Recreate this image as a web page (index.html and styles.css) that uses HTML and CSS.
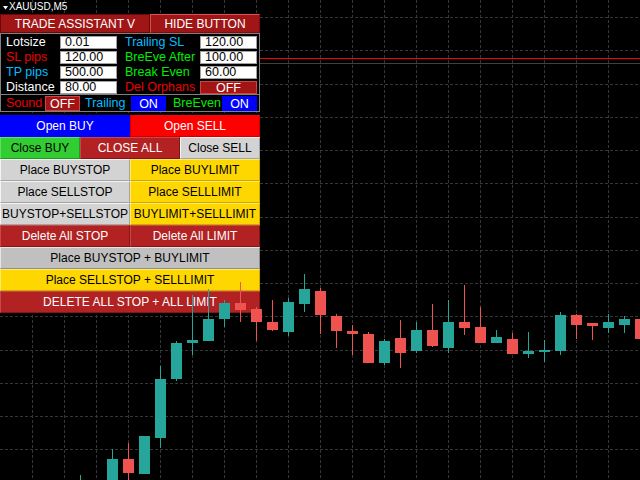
FILE: index.html
```html
<!DOCTYPE html>
<html>
<head>
<meta charset="utf-8">
<link rel="stylesheet" href="styles.css">
</head>
<body>
<div class="chart">
  <svg class="grid" width="640" height="480" viewBox="0 0 640 480">
    <g stroke="#363636" stroke-width="1" stroke-dasharray="3 2" shape-rendering="crispEdges">
      <line x1="32.5" y1="0" x2="32.5" y2="480"/><line x1="64.5" y1="0" x2="64.5" y2="480"/><line x1="96.5" y1="0" x2="96.5" y2="480"/>
      <line x1="128.5" y1="0" x2="128.5" y2="480"/><line x1="160.5" y1="0" x2="160.5" y2="480"/><line x1="192.5" y1="0" x2="192.5" y2="480"/>
      <line x1="224.5" y1="0" x2="224.5" y2="480"/><line x1="256.5" y1="0" x2="256.5" y2="480"/><line x1="288.5" y1="0" x2="288.5" y2="480"/>
      <line x1="320.5" y1="0" x2="320.5" y2="480"/><line x1="352.5" y1="0" x2="352.5" y2="480"/><line x1="384.5" y1="0" x2="384.5" y2="480"/>
      <line x1="416.5" y1="0" x2="416.5" y2="480"/><line x1="448.5" y1="0" x2="448.5" y2="480"/><line x1="480.5" y1="0" x2="480.5" y2="480"/>
      <line x1="512.5" y1="0" x2="512.5" y2="480"/><line x1="544.5" y1="0" x2="544.5" y2="480"/><line x1="576.5" y1="0" x2="576.5" y2="480"/>
      <line x1="608.5" y1="0" x2="608.5" y2="480"/>
      <line x1="0" y1="17.5" x2="640" y2="17.5"/><line x1="0" y1="50.5" x2="640" y2="50.5"/><line x1="0" y1="84.5" x2="640" y2="84.5"/>
      <line x1="0" y1="117.5" x2="640" y2="117.5"/><line x1="0" y1="150.5" x2="640" y2="150.5"/><line x1="0" y1="183.5" x2="640" y2="183.5"/>
      <line x1="0" y1="217.5" x2="640" y2="217.5"/><line x1="0" y1="250.5" x2="640" y2="250.5"/><line x1="0" y1="283.5" x2="640" y2="283.5"/>
      <line x1="0" y1="316.5" x2="640" y2="316.5"/><line x1="0" y1="350.5" x2="640" y2="350.5"/><line x1="0" y1="383.5" x2="640" y2="383.5"/>
      <line x1="0" y1="416.5" x2="640" y2="416.5"/><line x1="0" y1="449.5" x2="640" y2="449.5"/>
    </g>
    <g shape-rendering="crispEdges">
      <rect x="0" y="58" width="640" height="1" fill="#ff0000"/>
      <rect x="0" y="63" width="640" height="1" fill="#404040"/>
    </g>
  </svg>

  <div class="symbol"><svg class="tri" width="5" height="4" viewBox="0 0 5 4"><polygon points="0,0 5,0 2.5,3.5" fill="#ffffff"/></svg><span>XAUUSD,M5</span></div>

  <div class="panel">
    <div class="titlebar">
      <div class="tbtn title">TRADE ASSISTANT V</div>
      <div class="tbtn hide">HIDE BUTTON</div>
    </div>
    <div class="params">
      <span class="lbl c-white">Lotsize</span><span class="inp">0.01</span><span class="lbl lbl2 c-sky">Trailing SL</span><span class="inp">120.00</span>
      <span class="lbl c-red">SL pips</span><span class="inp">120.00</span><span class="lbl lbl2 c-lime">BreEve After</span><span class="inp">100.00</span>
      <span class="lbl c-sky">TP pips</span><span class="inp">500.00</span><span class="lbl lbl2 c-lime">Break Even</span><span class="inp">60.00</span>
      <span class="lbl c-white">Distance</span><span class="inp">80.00</span><span class="lbl lbl2 c-red">Del Orphans</span><span class="tg tg-off">OFF</span>
    </div>
    <div class="toggles">
      <span class="lbl tl1 c-red">Sound</span><span class="tg tg-off">OFF</span>
      <span class="lbl tl2 c-sky">Trailing</span><span class="tg tg-on">ON</span>
      <span class="lbl tl3 c-lime">BreEven</span><span class="tg tg-on">ON</span>
    </div>
    <div class="actions">
      <div class="row"><div class="btn half blue">Open BUY</div><div class="btn half red">Open SELL</div></div>
      <div class="row"><div class="btn w80 green">Close BUY</div><div class="btn w100 fire">CLOSE ALL</div><div class="btn w80 gray">Close SELL</div></div>
      <div class="row"><div class="btn half gray">Place BUYSTOP</div><div class="btn half gold">Place BUYLIMIT</div></div>
      <div class="row"><div class="btn half gray">Place SELLSTOP</div><div class="btn half gold">Place SELLLIMIT</div></div>
      <div class="row"><div class="btn half gray">BUYSTOP+SELLSTOP</div><div class="btn half gold">BUYLIMIT+SELLLIMIT</div></div>
      <div class="row"><div class="btn half fire">Delete All STOP</div><div class="btn half fire">Delete All LIMIT</div></div>
      <div class="row"><div class="btn full silver">Place BUYSTOP + BUYLIMIT</div></div>
      <div class="row"><div class="btn full gold">Place SELLSTOP + SELLLIMIT</div></div>
      <div class="row"><div class="btn full fire">DELETE ALL STOP + ALL LIMIT</div></div>
    </div>
  </div>

  <svg class="candles" width="640" height="480" viewBox="0 0 640 480">
    <g fill="#26a69a" shape-rendering="crispEdges">
      <rect x="80" y="475" width="1" height="5"/>
      <rect x="107" y="459" width="11" height="25"/><rect x="112" y="449" width="1" height="31"/>
      <rect x="139" y="436" width="11" height="38"/>
      <rect x="155" y="379" width="11" height="59"/><rect x="160" y="366" width="1" height="82"/>
      <rect x="171" y="343" width="11" height="36"/><rect x="176" y="341" width="1" height="40"/>
      <rect x="187" y="340" width="11" height="3"/><rect x="192" y="295" width="1" height="60"/>
      <rect x="203" y="319" width="11" height="22"/><rect x="208" y="289" width="1" height="52"/>
      <rect x="219" y="303" width="11" height="16"/><rect x="224" y="300" width="1" height="27"/>
      <rect x="283" y="302" width="11" height="30"/><rect x="288" y="298" width="1" height="38"/>
      <rect x="299" y="289" width="11" height="15"/><rect x="304" y="274" width="1" height="38"/>
      <rect x="379" y="341" width="11" height="22"/><rect x="384" y="339" width="1" height="26"/>
      <rect x="411" y="330" width="11" height="21"/><rect x="416" y="322" width="1" height="31"/>
      <rect x="443" y="322" width="11" height="26"/><rect x="448" y="300" width="1" height="53"/>
      <rect x="491" y="337" width="11" height="6"/><rect x="496" y="330" width="1" height="13"/>
      <rect x="523" y="351" width="11" height="3"/><rect x="528" y="332" width="1" height="26"/>
      <rect x="539" y="350" width="11" height="2"/><rect x="544" y="340" width="1" height="22"/>
      <rect x="555" y="315" width="11" height="36"/><rect x="560" y="312" width="1" height="43"/>
      <rect x="603" y="322" width="11" height="6"/><rect x="608" y="314" width="1" height="19"/>
      <rect x="619" y="319" width="11" height="6"/><rect x="624" y="316" width="1" height="17"/>
    </g>
    <g fill="#ef5350" shape-rendering="crispEdges">
      <rect x="123" y="459" width="11" height="14"/><rect x="128" y="443" width="1" height="40"/>
      <rect x="235" y="303" width="11" height="7"/><rect x="240" y="282" width="1" height="40"/>
      <rect x="251" y="309" width="11" height="13"/><rect x="256" y="307" width="1" height="34"/>
      <rect x="267" y="322" width="11" height="8"/><rect x="272" y="300" width="1" height="31"/>
      <rect x="315" y="291" width="11" height="24"/><rect x="320" y="288" width="1" height="46"/>
      <rect x="331" y="316" width="11" height="15"/><rect x="336" y="314" width="1" height="34"/>
      <rect x="347" y="331" width="11" height="3"/><rect x="352" y="325" width="1" height="30"/>
      <rect x="363" y="334" width="11" height="29"/><rect x="368" y="332" width="1" height="31"/>
      <rect x="395" y="338" width="11" height="15"/><rect x="400" y="320" width="1" height="48"/>
      <rect x="427" y="330" width="11" height="16"/><rect x="432" y="304" width="1" height="43"/>
      <rect x="459" y="322" width="11" height="6"/><rect x="464" y="285" width="1" height="50"/>
      <rect x="475" y="327" width="11" height="16"/><rect x="480" y="307" width="1" height="36"/>
      <rect x="507" y="339" width="11" height="15"/><rect x="512" y="333" width="1" height="21"/>
      <rect x="571" y="315" width="11" height="10"/><rect x="576" y="314" width="1" height="25"/>
      <rect x="587" y="323" width="11" height="3"/><rect x="592" y="323" width="1" height="17"/>
      <rect x="635" y="319" width="11" height="20"/>
    </g>
  </svg>
</div>
</body>
</html>
```
FILE: styles.css
```css
body {
  margin: 0;
  background: #000;
}

.chart {
  position: relative;
  width: 640px;
  height: 480px;
  overflow: hidden;
  background: #000;
  font-family: "Liberation Sans", Arial, sans-serif;
}

.grid,
.candles {
  position: absolute;
  left: 0;
  top: 0;
  display: block;
}

.candles {
  pointer-events: none;
}

.symbol {
  position: absolute;
  left: 3px;
  top: 1px;
  display: flex;
  align-items: center;
  gap: 1px;
  color: #fff;
  font-size: 10px;
  line-height: 12px;
}

.tri {
  display: block;
  margin-top: 1px;
}

.panel {
  position: absolute;
  left: 0;
  top: 14px;
  width: 260px;
}

.titlebar {
  display: flex;
  height: 19px;
}

.tbtn {
  box-sizing: border-box;
  display: flex;
  align-items: center;
  justify-content: center;
  color: #fff;
  font-size: 12px;
  background: #a01616;
  white-space: nowrap;
}

.title {
  width: 150px;
  border: 1px solid #6a0808;
}

.hide {
  width: 110px;
  border: 1px solid;
  border-color: #d65050 #7a0c0c #7a0c0c #d65050;
}

.params {
  box-sizing: border-box;
  height: 62px;
  border: 1px solid #808080;
  background: #000;
  padding-top: 2px;
  display: grid;
  grid-template-columns: 59px 57px 83px 57px;
  grid-template-rows: repeat(4, 13px);
  row-gap: 2px;
  align-content: start;
}

.lbl {
  display: flex;
  align-items: center;
  font-size: 12.5px;
  line-height: 13px;
  white-space: nowrap;
  padding-left: 5px;
}

.lbl2 {
  padding-left: 8px;
}

.inp {
  box-sizing: border-box;
  display: flex;
  align-items: center;
  background: #fff;
  border: 1px solid #a0a0a0;
  color: #000;
  font-size: 12.5px;
  line-height: 11px;
  padding-left: 4px;
  white-space: nowrap;
}

.c-white { color: #ffffff; }
.c-red { color: #ee0000; }
.c-sky { color: #00bfff; }
.c-lime { color: #00ee00; }

.tg {
  box-sizing: border-box;
  display: flex;
  align-items: center;
  justify-content: center;
  color: #fff;
  font-size: 12.5px;
  line-height: 12px;
}

.tg-off {
  background: #a31515;
  border: 1px solid #cc4444;
}

.tg-on {
  background: #0000ff;
}

.toggles {
  box-sizing: border-box;
  margin-top: -1px;
  height: 18px;
  border: 1px solid #808080;
  background: #000;
  padding-top: 1px;
  display: grid;
  grid-template-columns: 44px 35px 51px 35px 56px 35px;
  grid-template-rows: 15px;
}

.tl1 { padding-left: 5px; }
.tl2 { padding-left: 5px; }
.tl3 { padding-left: 7px; }

.actions {
  margin-top: 3px;
  display: flex;
  flex-direction: column;
}

.row {
  display: flex;
  height: 22px;
}

.btn {
  box-sizing: border-box;
  height: 22px;
  display: flex;
  align-items: center;
  justify-content: center;
  font-size: 12px;
  white-space: nowrap;
  border: 1px solid transparent;
}

.half { width: 130px; }
.full { width: 260px; }
.w80 { width: 80px; }
.w100 { width: 100px; }

.blue {
  background: #0000ff;
  border-color: #0000ff;
  color: #fff;
}

.red {
  background: #ff0000;
  border-color: #ff0000 #d00000 #d00000 #d00000;
  color: #fff;
}

.green {
  background: #32cd32;
  border-color: #5fe05f #209a20 #209a20 #5fe05f;
  color: #000;
}

.fire {
  background: #b22222;
  border-color: #c84848 #861616 #861616 #c84848;
  color: #fff;
}

.gray {
  background: #d3d3d3;
  border-color: #f4f4f4 #a4a4a4 #a4a4a4 #f4f4f4;
  color: #000;
}

.silver {
  background: #c0c0c0;
  border-color: #e6e6e6 #8e8e8e #8e8e8e #e6e6e6;
  color: #000;
}

.gold {
  background: #ffd700;
  border-color: #ffea70 #d0a800 #d0a800 #ffea70;
  color: #000;
}
```
